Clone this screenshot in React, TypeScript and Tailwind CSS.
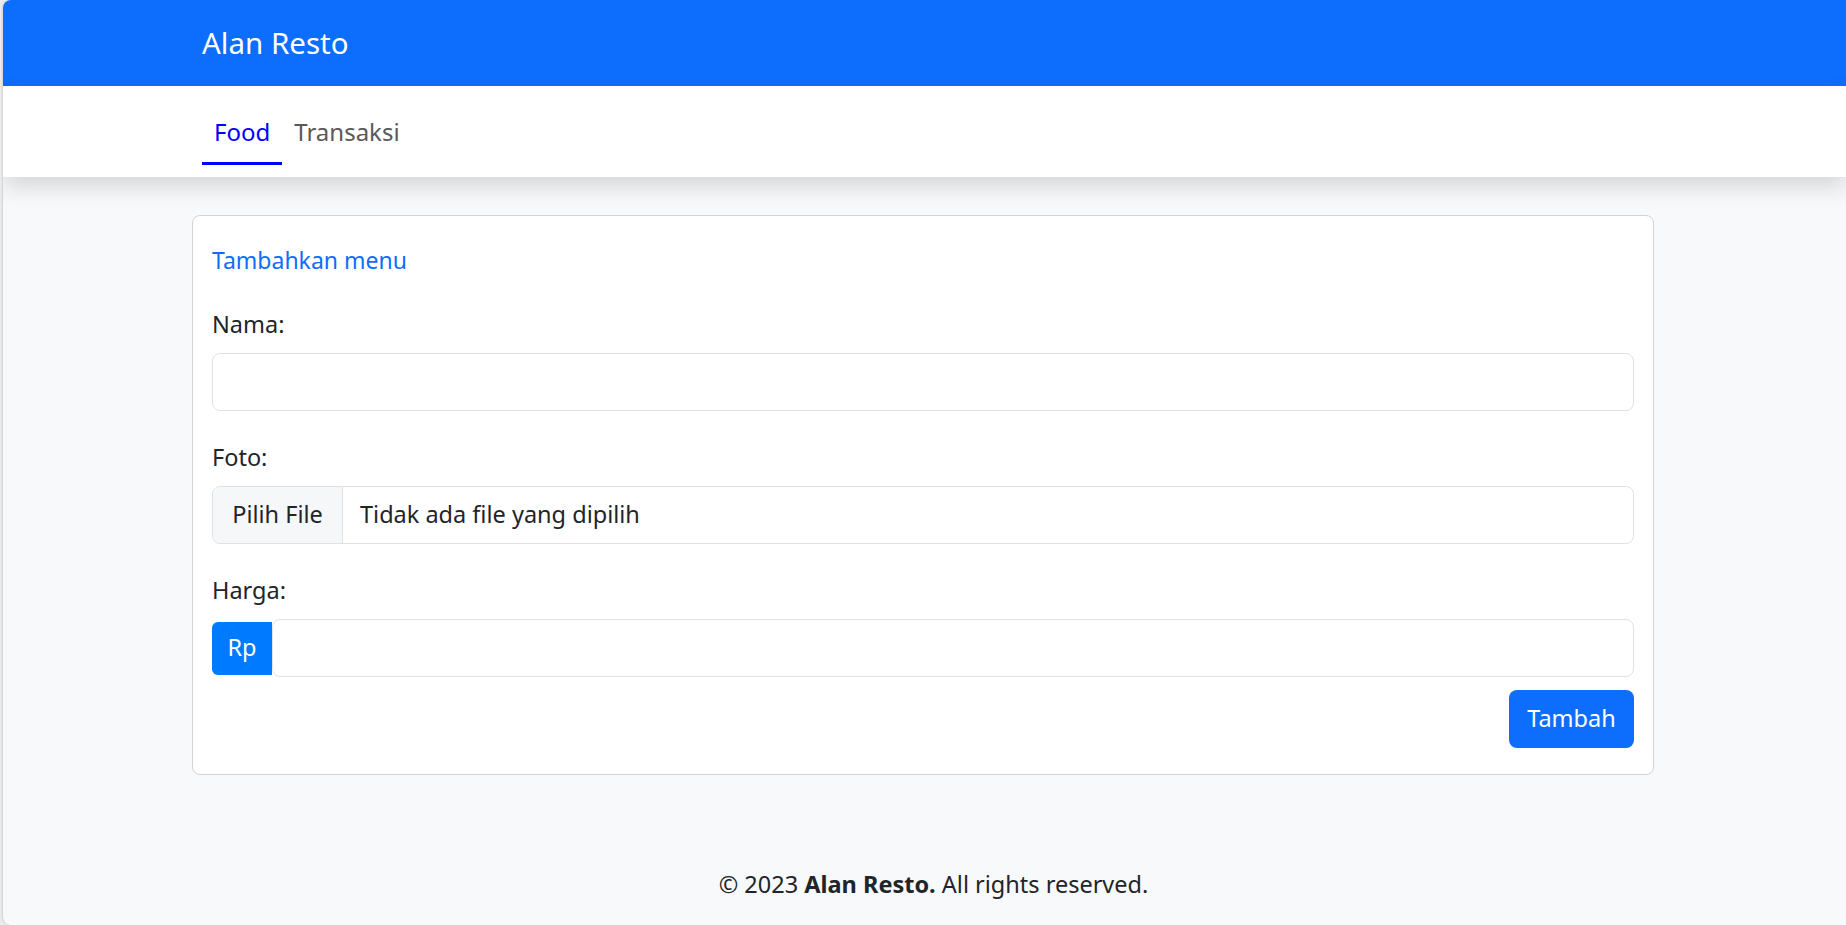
import React from "react";

const fieldLabel = "block text-[23.5px] leading-[36px] text-[#212529]";
const inputBox =
  "block w-full h-[58px] rounded-lg border border-[#dee2e6] bg-white px-4 text-[23.5px] text-[#212529] outline-none";

const Field = ({ label, children }: { label: string; children: React.ReactNode }) => (
  <div className="mt-[28px]">
    <label className={fieldLabel}>{label}</label>
    <div className="mt-[11px]">{children}</div>
  </div>
);

export default function App() {
  return (
    <div className="bg-[#ececec] font-['Noto_Sans',sans-serif]">
      <div className="ml-[3px] flex h-[925px] flex-col overflow-hidden rounded-l-[8px] bg-[#f8f9fa] shadow-[-1px_0_2px_rgba(0,0,0,0.12)]">
        {/* brand bar */}
        <header className="flex h-[86px] shrink-0 items-center bg-[#0d6efd] pl-[199px]">
          <span className="text-[29.5px] leading-none text-white">Alan Resto</span>
        </header>

        {/* tabs */}
        <nav className="relative z-10 flex h-[91px] shrink-0 bg-white pl-[199px] pt-[28px] shadow-[0_10px_22px_rgba(0,0,0,0.14)]">
          <a className="flex flex-col px-3 text-[24px] leading-[36px] text-[#0000ff]">
            Food
            <span className="-mx-3 mt-[12px] h-[3px] bg-[#0000ff]" />
          </a>
          <a className="px-3 text-[24px] leading-[36px] text-[#595959]">Transaksi</a>
        </nav>

        <main className="ml-[189px] mt-[38px] w-[1462px] shrink-0 rounded-lg border border-[#d4d4d4] bg-white px-[19px] pb-[26px] pt-[26px]">
          <h5 className="text-[23px] leading-[36px] text-[#0d6efd]">Tambahkan menu</h5>

          <Field label="Nama:">
            <input type="text" className={inputBox} />
          </Field>

          <Field label="Foto:">
            <div className="flex h-[58px] w-full overflow-hidden rounded-lg border border-[#dee2e6] bg-white text-[23.5px] text-[#212529]">
              <span className="flex w-[130px] shrink-0 items-center justify-center border-r border-[#dee2e6] bg-[#f6f7f9]">
                Pilih File
              </span>
              <span className="flex items-center pl-[17px]">Tidak ada file yang dipilih</span>
            </div>
          </Field>

          <Field label="Harga:">
            <div className="flex items-center">
              <span className="flex h-[53px] w-[60px] shrink-0 items-center justify-center rounded-l-[6px] bg-[#007bff] text-[23.5px] text-white">
                Rp
              </span>
              <input type="number" className={inputBox + " h-[57px] flex-1"} />
            </div>
          </Field>

          <div className="mt-[13px] flex justify-end">
            <button className="h-[58px] w-[125px] rounded-lg bg-[#0d6efd] text-[23.5px] text-white">
              Tambah
            </button>
          </div>
        </main>

        <footer className="mt-[91px] pb-[23px] pl-[18px] text-center text-[23.5px] leading-[36px] text-[#212529]">
          © 2023 <b className="font-bold">Alan Resto.</b> All rights reserved.
        </footer>
      </div>
    </div>
  );
}
